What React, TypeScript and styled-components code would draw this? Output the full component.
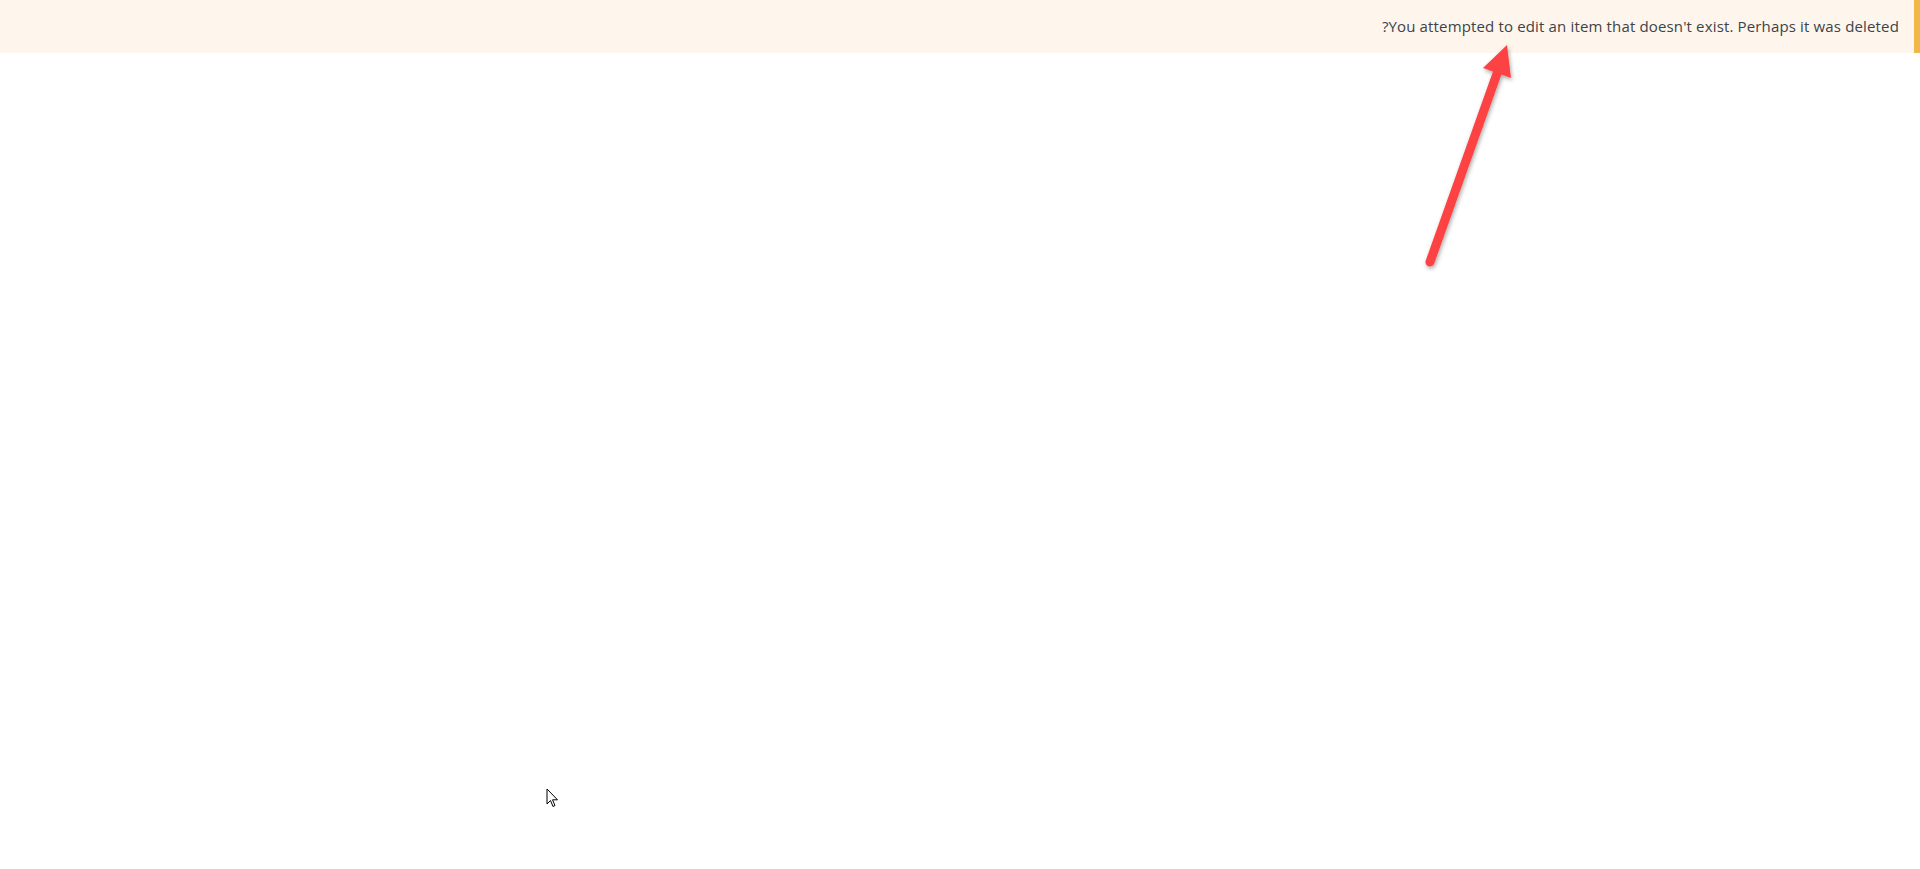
import styled, { createGlobalStyle } from "styled-components";

const GlobalStyle = createGlobalStyle`
  html, body {
    margin: 0;
    padding: 0;
    background: #ffffff;
  }
  body {
    font-family: "Open Sans", "Noto Sans", "Liberation Sans", sans-serif;
  }
`;

// Full-height page, the notice sits at the top in RTL flow.
const Page = styled.div`
  position: relative;
  width: 100%;
  height: 869px;
  overflow: hidden;
  direction: rtl;
`;

// Warning notice bar with the accent stripe on the start (right) side.
const Notice = styled.div`
  display: flex;
  align-items: center;
  height: 53px;
  box-sizing: border-box;
  padding: 0 15px 2px;
  background: #fef6ec;
  border-right: 6px solid #f0b849;
`;

const NoticeText = styled.p`
  margin: 0;
  font-size: 15px;
  color: #3c434a;
  letter-spacing: 0.15px;
`;

// Annotation layer drawn over the page (the red arrow and the mouse pointer).
const Overlay = styled.svg`
  position: absolute;
  inset: 0;
  pointer-events: none;
`;

export default function App() {
  return (
    <>
      <GlobalStyle />
      <Page>
        <Notice>
          <NoticeText>You attempted to edit an item that doesn't exist. Perhaps it was deleted?</NoticeText>
        </Notice>
        <Overlay width="1920" height="869" viewBox="0 0 1920 869">
          <defs>
            <filter id="shadow" x="-50%" y="-50%" width="200%" height="200%">
              <feDropShadow dx="1" dy="2" stdDeviation="2" floodColor="#000" floodOpacity="0.35" />
            </filter>
          </defs>
          <g filter="url(#shadow)">
            <line x1="1430" y1="262" x2="1499" y2="68" stroke="#fc4343" strokeWidth="9" strokeLinecap="round" />
            <polygon points="1507,45 1483,68 1511,78" fill="#fc4343" />
          </g>
          <path
            d="M547 789 L547 804 L550.5 800.5 L553 806.5 L555 805.5 L552.5 799.8 L557.5 799.8 Z"
            fill="#fff"
            stroke="#000"
            strokeWidth="1"
            strokeLinejoin="miter"
          />
        </Overlay>
      </Page>
    </>
  );
}
